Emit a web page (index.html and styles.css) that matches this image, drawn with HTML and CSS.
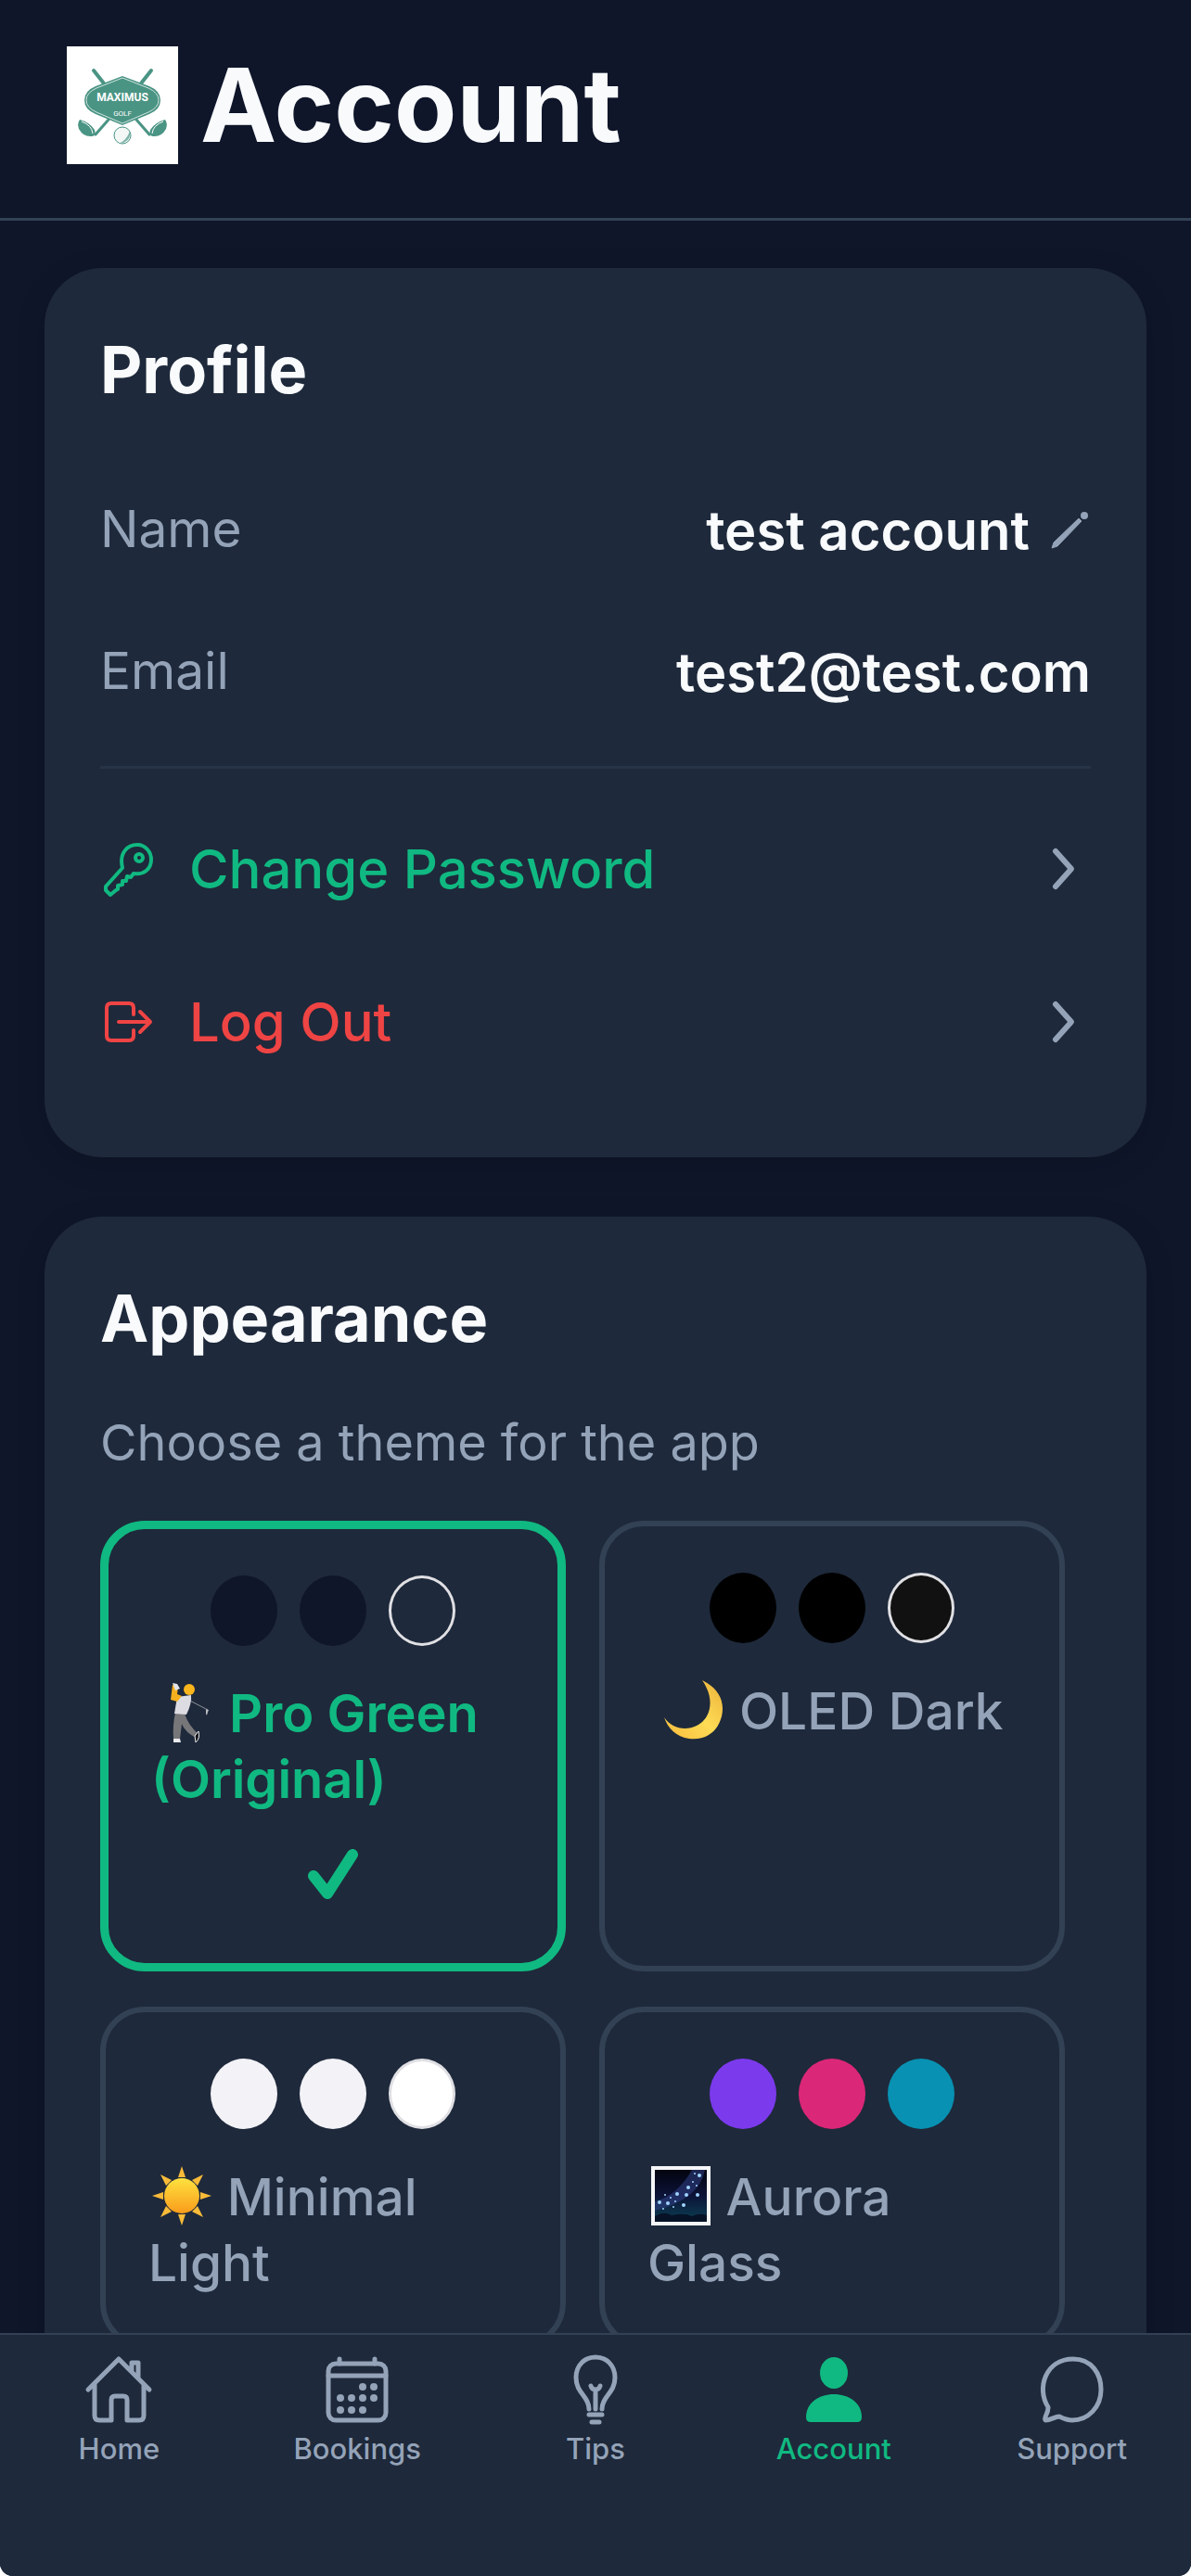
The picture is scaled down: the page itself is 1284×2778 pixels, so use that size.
FILE: index.html
```html
<!DOCTYPE html>
<html lang="en">
<head>
  <meta charset="UTF-8">
  <meta name="viewport" content="width=device-width, initial-scale=1.0">
  <title>Account</title>
  <link rel="stylesheet" href="styles.css">
</head>
<body>
  <header class="header">
    <svg class="logo" viewBox="0 0 120 127" role="img" aria-label="Maximus Golf">
      <rect width="120" height="127" fill="#fff"/>
      <g fill="none" stroke="#4a9484" stroke-linecap="round">
        <path d="M29 26 L40 40 M91 26 L80 40" stroke-width="4"/>
        <path d="M45 79 L31 95 M75 79 L89 95" stroke-width="3"/>
      </g>
      <path d="M60 32 L89 43 Q101 48 101 58 Q101 68 89 73 L60 85 L31 73 Q19 68 19 58 Q19 48 31 43 Z" fill="#4a9484"/>
      <path d="M60 34 L88 45 Q99 50 99 58 Q99 66 88 71 L60 83 L32 71 Q21 66 21 58 Q21 50 32 45 Z" fill="none" stroke="#cfe4df" stroke-width="1"/>
      <path d="M14 79 Q25 82 30 90 Q32 97 27 97 Q18 98 13 89 Q11 83 14 79 Z M106 79 Q95 82 90 90 Q88 97 93 97 Q102 98 107 89 Q109 83 106 79 Z" fill="#4a9484"/>
      <path d="M16 81 Q27 85 28 94 M104 81 Q93 85 92 94" fill="none" stroke="#fff" stroke-width="1"/>
      <circle cx="60" cy="96" r="9" fill="#f3f8f7" stroke="#4a9484" stroke-width="1"/>
      <path d="M68 91 Q70 103 56 105 Q65 101 68 91 Z" fill="#7fb3a8"/>
      <text class="logo-name" x="60" y="59">MAXIMUS</text>
      <text class="logo-sub" x="60" y="75">GOLF</text>
    </svg>
    <h1>Account</h1>
  </header>

  <main class="content">
    <section class="card">
      <h2>Profile</h2>
      <dl class="details">
        <div class="detail-row">
          <dt>Name</dt>
          <dd>test account
            <button class="edit-button" aria-label="Edit name">
              <svg viewBox="0 0 44 44"><path d="M2 41 L4 35 L31 9 L34 12 L8 39 Z" fill="currentColor" stroke="currentColor" stroke-width="1" stroke-linejoin="round"/><circle cx="37" cy="6" r="4" fill="currentColor"/></svg>
            </button>
          </dd>
        </div>
        <div class="detail-row">
          <dt>Email</dt>
          <dd>test2@test.com</dd>
        </div>
      </dl>
      <button class="action action-green">
        <svg class="action-icon" viewBox="0 0 60 60"><path d="M24 29 C20 12 30 4 40 4 C49 4 55 12 55 20 C55 30 47 37 36 35 L33 39 L29 38 L28 43 L24 43 L24 47 L19 48 L19 52 L17 53 L11 58 L6 53 L6 49 Z"/><circle cx="42" cy="18" r="4"/></svg>
        <span>Change Password</span>
        <svg class="chevron" viewBox="0 0 30 48"><path d="M7 5 L24 24 L7 43"/></svg>
      </button>
      <button class="action action-red">
        <svg class="action-icon" viewBox="0 0 60 60"><path d="M36 22 V15 Q36 10 31 10 H12 Q7 10 7 15 V45 Q7 50 12 50 H31 Q36 50 36 45 V39 M20 30 H53 M43 19 L54 30 L43 41"/></svg>
        <span>Log Out</span>
        <svg class="chevron" viewBox="0 0 30 48"><path d="M7 5 L24 24 L7 43"/></svg>
      </button>
    </section>

    <section class="card">
      <h2>Appearance</h2>
      <p class="hint">Choose a theme for the app</p>
      <div class="themes">
        <button class="theme selected" aria-pressed="true">
          <span class="swatches"><i class="swatch navy"></i><i class="swatch navy"></i><i class="swatch slate ringed"></i></span>
          <span class="theme-name"><svg class="emoji" viewBox="0 0 64 64">
              <path d="M34 17 L57 29 L56 34" fill="none" stroke="#8d929a" stroke-width="1"/>
              <path d="M55 28 L58 29 L55 35" fill="#b8bbc0"/>
              <path d="M22 32 L32 33 Q36 46 48 56 L46 60 Q32 53 29 44 L27 60 L20 60 Q19 45 22 32 Z" fill="#77777a"/>
              <path d="M20 60 H27 L28 64 H20 Z" fill="#e9e9ee"/>
              <path d="M43 57 L47 52 Q49 60 44 64 Z" fill="#15161c" stroke="#eee" stroke-width="1"/>
              <path d="M24 15 L39 13 Q40 22 34 34 L21 33 Z" fill="#dcdce2"/>
              <path d="M19 2 L25 4 L24 12 L29 14 L24 20 L17 18 Z" fill="#f5b01e"/>
              <path d="M19 0 L24 1 L27 6 L22 8 Z" fill="#e4e5ea"/>
              <circle cx="37" cy="7" r="6" fill="#fbb51c"/>
            </svg> Pro Green (Original)</span>
          <svg class="check" viewBox="0 0 54 54"><path d="M6 29 L21 48 L48 6"/></svg>
        </button>
        <button class="theme" aria-pressed="false">
          <span class="swatches"><i class="swatch black"></i><i class="swatch black"></i><i class="swatch coal ringed"></i></span>
          <span class="theme-name"><svg class="emoji" viewBox="0 0 64 64">
              <defs><linearGradient id="moon" x1="0" y1="1" x2="1" y2="0"><stop offset="0" stop-color="#f6b93c"/><stop offset="0.5" stop-color="#ffdc55"/><stop offset="1" stop-color="#e9b03a"/></linearGradient></defs>
              <path d="M41 0 C58 8 66 22 62 39 C57 58 42 65 27 63 C13 61 4 52 0 40 C8 52 23 55 35 49 C51 41 55 20 41 0 Z" fill="url(#moon)"/>
            </svg> OLED Dark</span>
        </button>
        <button class="theme" aria-pressed="false">
          <span class="swatches"><i class="swatch mist"></i><i class="swatch mist"></i><i class="swatch white ringed"></i></span>
          <span class="theme-name"><svg class="emoji" viewBox="0 0 64 64">
              <defs><linearGradient id="sun" x1="0" y1="0" x2="0" y2="1"><stop offset="0" stop-color="#ffe23f"/><stop offset="1" stop-color="#f99b1b"/></linearGradient></defs>
              <path d="M32 0 L36 12 H28 Z M64 32 L52 36 V28 Z M32 64 L28 52 H36 Z M0 32 L12 28 V36 Z M9 9 L21 15 L15 21 Z M55 9 L49 21 L43 15 Z M55 55 L43 49 L49 43 Z M9 55 L15 43 L21 49 Z" fill="#f9bb38"/>
              <circle cx="32" cy="32" r="19" fill="url(#sun)"/>
            </svg> Minimal Light</span>
        </button>
        <button class="theme" aria-pressed="false">
          <span class="swatches"><i class="swatch violet"></i><i class="swatch pink"></i><i class="swatch cyan"></i></span>
          <span class="theme-name"><svg class="emoji" viewBox="0 0 64 64">
              <defs><linearGradient id="sky" x1="0" y1="0" x2="0" y2="1"><stop offset="0" stop-color="#03040f"/><stop offset="0.5" stop-color="#0c1338"/><stop offset="1" stop-color="#0b4052"/></linearGradient></defs>
              <rect width="64" height="64" fill="#f5f6f8"/>
              <rect x="4" y="4" width="56" height="56" fill="url(#sky)"/>
              <path d="M4 38 Q28 32 44 4 H58 Q52 36 4 48 Z" fill="#34458f" opacity="0.5"/>
              <path d="M4 54 Q14 48 22 53 Q36 50 44 54 Q52 50 60 53 V60 H4 Z" fill="#071226"/>
              <g fill="#9fd4ff"><circle cx="47" cy="8" r="1"/><circle cx="52" cy="10" r="2"/><circle cx="45" cy="17" r="1"/><circle cx="40" cy="23" r="2"/><circle cx="49" cy="21" r="1"/><circle cx="50" cy="31" r="2"/><circle cx="38" cy="31" r="2"/><circle cx="28" cy="30" r="2"/><circle cx="21" cy="34" r="1"/><circle cx="15" cy="31" r="1"/><circle cx="9" cy="39" r="2"/><circle cx="18" cy="40" r="2"/><circle cx="26" cy="38" r="1"/><circle cx="35" cy="42" r="2"/><circle cx="24" cy="44" r="1"/><circle cx="13" cy="46" r="1"/></g>
            </svg> Aurora Glass</span>
        </button>
      </div>
    </section>
  </main>

  <nav class="tabbar">
    <a class="tab" href="#home">
      <svg viewBox="0 0 76 76"><path d="M5 38 L38 5 L71 38 M12 32 V66 Q12 71 17 71 H30 V49 Q30 45 34 45 H43 Q47 45 47 49 V71 H60 Q65 71 65 66 V32 M52 17 V9 H59 V25"/></svg>
      <span>Home</span>
    </a>
    <a class="tab" href="#bookings">
      <svg viewBox="0 0 76 76"><path d="M19 5 V10 M57 5 V10"/><rect x="7" y="10" width="62" height="61" rx="8"/><path d="M7 23 H69"/><g class="dots"><circle cx="44" cy="35" r="4"/><circle cx="56" cy="35" r="4"/><circle cx="20" cy="47" r="4"/><circle cx="32" cy="47" r="4"/><circle cx="44" cy="47" r="4"/><circle cx="56" cy="47" r="4"/><circle cx="20" cy="60" r="4"/><circle cx="32" cy="60" r="4"/><circle cx="44" cy="60" r="4"/></g></svg>
      <span>Bookings</span>
    </a>
    <a class="tab" href="#tips">
      <svg viewBox="0 0 76 76"><path d="M31 59 C31 45 17 42 17 25 C17 12 26 3 38 3 C50 3 59 12 59 25 C59 42 45 45 45 59 M38 59 V38 M33 34 Q34 38 38 38 Q42 38 43 34 M31 65 H45 M34 73 H42"/></svg>
      <span>Tips</span>
    </a>
    <a class="tab active" href="#account">
      <svg viewBox="0 0 76 76"><g class="dots"><ellipse cx="38" cy="20" rx="15" ry="17"/><path d="M8 68 C8 52 22 43 38 43 C54 43 68 52 68 68 Q68 73 63 73 H13 Q8 73 8 68 Z"/></g></svg>
      <span>Account</span>
    </a>
    <a class="tab" href="#support">
      <svg viewBox="0 0 76 76"><path d="M12 57 C-1 37 9 5 39 5 C59 5 69 21 69 38 C69 57 55 71 38 71 C32 71 28 69 24 67 C19 67 15 71 9 71 Q8 69 10 65 Q12 61 12 57 Z"/></svg>
      <span>Support</span>
    </a>
  </nav>
</body>
</html>
```

FILE: styles.css
```css
* {
  box-sizing: border-box;
}

html {
  background-color: #fff;
}

body {
  display: flex;
  flex-direction: column;
  height: 100vh;
  margin: 0;
  border-radius: 0 0 14px 14px;
  overflow: hidden;
  background-color: #0f162a;
  color: #f8fafc;
  font-family: Inter, "Liberation Sans", sans-serif;
}

h1, h2, p, dl, dd {
  margin: 0;
}

button {
  margin: 0;
  padding: 0;
  border: none;
  background: none;
  color: inherit;
  font: inherit;
  text-align: left;
  cursor: pointer;
}

/* Header */
.header {
  display: flex;
  align-items: center;
  gap: 24px;
  padding: 47px 72px 56px;
  border-bottom: 3px solid #334155;
}

.header h1 {
  font-size: 110px;
  line-height: 132px;
  font-weight: 700;
}

.logo {
  width: 120px;
  height: 127px;
}

.logo-name, .logo-sub {
  fill: #fff;
  font-family: Roboto, sans-serif;
  text-anchor: middle;
}

.logo-name {
  font-size: 12px;
  font-weight: 700;
}

.logo-sub {
  font-size: 8px;
}

/* Cards */
.content {
  display: flex;
  flex: 1;
  flex-direction: column;
  gap: 64px;
  min-height: 0;
  padding: 51px 48px;
  overflow-y: auto;
  scrollbar-width: none;
}

.card {
  flex: none;
  padding: 60px 60px 64px;
  border-radius: 62px;
  background-color: #1e293b;
  box-shadow: 0 8px 32px rgba(0, 0, 0, 0.15);
}

.card h2 {
  font-size: 70px;
  line-height: 100px;
  font-weight: 700;
}

/* Profile */
.details {
  margin-bottom: 25px;
  padding: 44px 0 27px;
  border-bottom: 3px solid #273347;
}

.detail-row {
  display: flex;
  align-items: center;
  justify-content: space-between;
  height: 153px;
}

.detail-row dt {
  color: #94a3b8;
  font-size: 55px;
}

.detail-row dd {
  display: flex;
  align-items: center;
  gap: 22px;
  padding-top: 4px;
  font-size: 58px;
  font-weight: 600;
}

.edit-button {
  width: 44px;
  height: 44px;
  color: #94a3b8;
}

.edit-button svg {
  display: block;
}

.action {
  display: flex;
  align-items: center;
  gap: 36px;
  width: 100%;
  height: 165px;
  font-size: 58px;
  font-weight: 500;
}

.action span {
  flex: 1;
}

.action-green {
  color: #10b981;
}

.action-red {
  color: #ef4444;
}

.action-icon {
  width: 60px;
  height: 60px;
  fill: none;
  stroke: currentColor;
  stroke-width: 4px;
  stroke-linecap: round;
  stroke-linejoin: round;
}

.chevron {
  width: 30px;
  height: 48px;
  margin-right: 15px;
  fill: none;
  stroke: #94a3b8;
  stroke-width: 6px;
  stroke-linecap: round;
  stroke-linejoin: round;
}

/* Appearance */
.hint {
  margin: 48px 0 48px;
  color: #94a3b8;
  font-size: 54px;
  line-height: 72px;
}

.themes {
  display: flex;
  flex-wrap: wrap;
  gap: 38px 36px;
}

.theme {
  display: flex;
  flex-direction: column;
  align-items: center;
  width: 47%;
  min-height: 363px;
  padding: 50px 46px;
  border: 6px solid #334155;
  border-radius: 48px;
  color: #94a3b8;
  font-size: 55px;
  line-height: 71px;
  font-weight: 500;
}

.theme.selected {
  border: 9px solid #10b981;
  color: #10b981;
  font-size: 56px;
  font-weight: 600;
}

.swatches {
  display: flex;
  gap: 24px;
  margin-bottom: 38px;
}

.swatch {
  width: 72px;
  height: 76px;
  border-radius: 50%;
}

.ringed {
  border: 3px solid #e0e0e4;
}

.navy { background-color: #0f162a; }
.slate { background-color: #1e293b; }
.black { background-color: #000; }
.coal { background-color: #111; }
.mist { background-color: #f2f2f7; }
.white { background-color: #fff; }
.violet { background-color: #7c3aed; }
.pink { background-color: #db2777; }
.cyan { background-color: #0891b2; }

.emoji {
  width: 64px;
  height: 66px;
  margin: 0 2px 0 4px;
  vertical-align: -12px;
}

.check {
  width: 54px;
  height: 54px;
  margin: 39px 0 19px;
  fill: none;
  stroke: currentColor;
  stroke-width: 12px;
  stroke-linecap: round;
  stroke-linejoin: round;
}

/* Tab bar */
.tabbar {
  display: flex;
  height: 262px;
  padding-top: 21px;
  border-top: 2px solid #334155;
  background-color: #1e293b;
}

.tab {
  display: flex;
  flex: 1;
  flex-direction: column;
  align-items: center;
  gap: 6px;
  color: #94a3b8;
  font-size: 31px;
  line-height: 40px;
  font-weight: 500;
  text-decoration: none;
}

.tab.active {
  color: #10b981;
}

.tab svg {
  width: 76px;
  height: 76px;
  fill: none;
  stroke: currentColor;
  stroke-width: 5px;
  stroke-linecap: round;
  stroke-linejoin: round;
}

.tab .dots {
  fill: currentColor;
  stroke: none;
}
```
